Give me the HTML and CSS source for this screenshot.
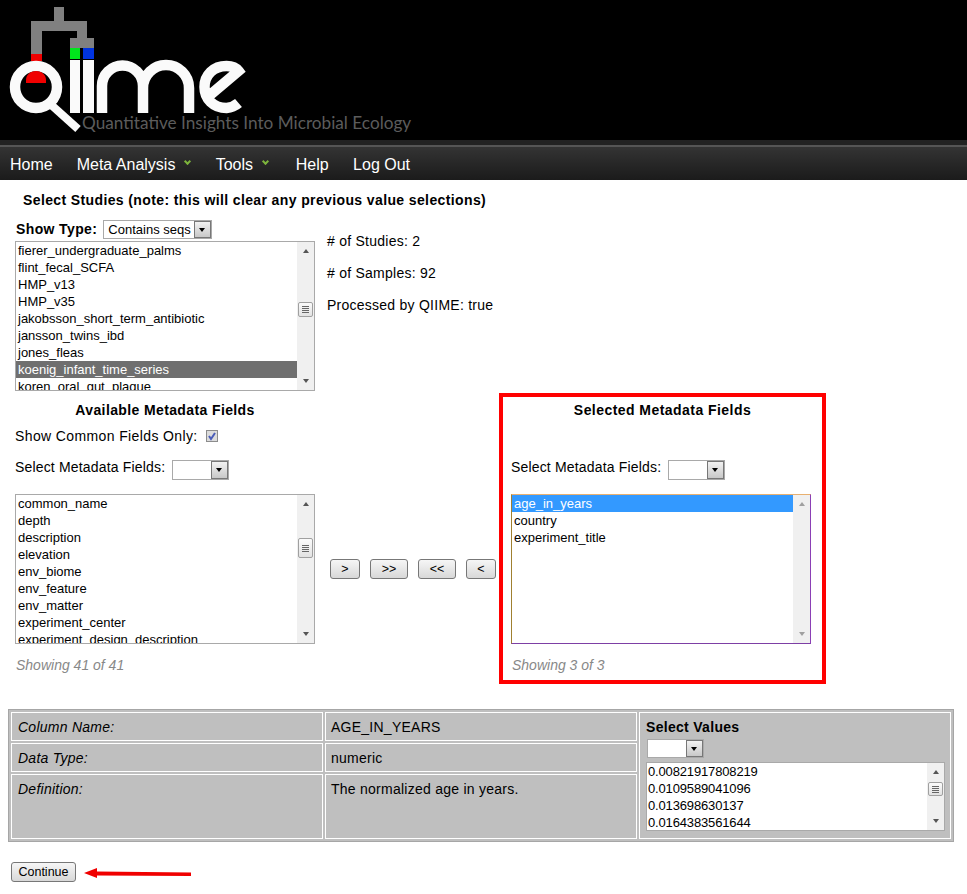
FILE: index.html
```html
<!DOCTYPE html>
<html>
  <head>
    <title>QIIME Meta Analysis</title>
    <link rel="stylesheet" href="styles.css">
  </head>
  <body>
    <header class="banner">
      <svg class="logo" width="250" height="135" viewBox="0 0 250 135">
        <path class="tree" d="M54 7h10v14h23v17h7v10H70V38h7v-7H42v23H31V21h23z"/>
        <rect class="red" x="31" y="54" width="11" height="7"/>
        <rect class="green" x="70" y="48" width="10" height="11"/>
        <rect class="blue" x="83" y="48" width="11" height="11"/>
        <circle class="stroke" cx="36" cy="87" r="21" stroke-width="10.5"/>
        <path class="stroke" stroke-width="8" d="M48 102 78 129"/>
        <path class="red" d="M26 83v-3c0-5 4-9 10-9s10 4 10 9v3z"/>
        <path class="white" d="M70 60h10v53H70zM83 60h11v53H83z"/>
        <path class="stroke" stroke-width="10.5" d="M102 113V86a20.5 20.5 0 0 1 41 0v27M143 88a23 23 0 0 1 46 0v25"/>
        <path class="stroke" stroke-width="10.5" d="M238.500 103a21 21 0 0 1-12 5c-13 0-22-9-22-21s9-21 22-21c5 0 9 1 12 5l-32 27"/>
      </svg>
      <div class="tagline">Quantitative Insights Into Microbial Ecology</div>
    </header>
    <nav class="menu">
      <a class="menu-item home">Home</a>
      <a class="menu-item meta">Meta Analysis<span class="caret"></span></a>
      <a class="menu-item tools">Tools<span class="caret"></span></a>
      <a class="menu-item help">Help</a>
      <a class="menu-item">Log Out</a>
    </nav>

    <main class="page">
      <h3 class="page-title">Select Studies (note: this will clear any previous value selections)</h3>

      <section class="studies">
        <div class="studies-left">
          <div class="show-type">
            <b class="show-label">Show Type:</b>
            <div class="dropdown wide"><span class="dropdown-text">Contains seqs</span><span class="dropdown-btn"></span></div>
          </div>
          <div class="listbox">
            <ul class="options">
              <li>fierer_undergraduate_palms</li>
              <li>flint_fecal_SCFA</li>
              <li>HMP_v13</li>
              <li>HMP_v35</li>
              <li>jakobsson_short_term_antibiotic</li>
              <li>jansson_twins_ibd</li>
              <li>jones_fleas</li>
              <li class="picked-gray">koenig_infant_time_series</li>
              <li>koren_oral_gut_plaque</li>
            </ul>
            <div class="scrollbar"><span class="arrow-up"></span><span class="thumb thumb-studies"></span><span class="arrow-down"></span></div>
          </div>
        </div>
        <div class="stats">
          <p># of Studies: 2</p>
          <p># of Samples: 92</p>
          <p>Processed by QIIME: true</p>
        </div>
      </section>

      <section class="fields">
        <div class="panel">
          <h4 class="panel-title">Available Metadata Fields</h4>
          <div class="common-row">
            Show Common Fields Only:
            <svg class="checkbox" width="12" height="12" viewBox="0 0 12 12">
              <rect x="0.5" y="0.5" width="11" height="11" fill="#dcdcdc" stroke="#8c8c8c"/>
              <path d="M3 6l2 3 4-6" fill="none" stroke="#4a5cb8" stroke-width="2"/>
            </svg>
          </div>
          <div class="select-row">
            <span class="select-label">Select Metadata Fields:</span>
            <div class="dropdown"><span class="dropdown-text"></span><span class="dropdown-btn"></span></div>
          </div>
          <div class="listbox field-list">
            <ul class="options">
              <li>common_name</li>
              <li>depth</li>
              <li>description</li>
              <li>elevation</li>
              <li>env_biome</li>
              <li>env_feature</li>
              <li>env_matter</li>
              <li>experiment_center</li>
              <li>experiment_design_description</li>
            </ul>
            <div class="scrollbar"><span class="arrow-up"></span><span class="thumb thumb-fields"></span><span class="arrow-down"></span></div>
          </div>
          <div class="showing">Showing 41 of 41</div>
        </div>

        <div class="movers">
          <button class="btn mover">&gt;</button>
          <button class="btn mover double">&gt;&gt;</button>
          <button class="btn mover double">&lt;&lt;</button>
          <button class="btn mover">&lt;</button>
        </div>

        <div class="panel selected">
          <h4 class="panel-title">Selected Metadata Fields</h4>
          <div class="common-row"></div>
          <div class="select-row">
            <span class="select-label">Select Metadata Fields:</span>
            <div class="dropdown"><span class="dropdown-text"></span><span class="dropdown-btn"></span></div>
          </div>
          <div class="listbox field-list focused">
            <ul class="options">
              <li class="picked-blue">age_in_years</li>
              <li>country</li>
              <li>experiment_title</li>
            </ul>
            <div class="scrollbar disabled"><span class="arrow-up"></span><span class="arrow-down"></span></div>
          </div>
          <div class="showing">Showing 3 of 3</div>
        </div>
      </section>

      <table class="details">
        <tr class="row-short">
          <td class="name">Column Name:</td>
          <td class="value">AGE_IN_YEARS</td>
          <td rowspan="3">
            <b class="values-title">Select Values</b>
            <div class="dropdown values-drop"><span class="dropdown-text"></span><span class="dropdown-btn"></span></div>
            <div class="listbox values-list">
              <ul class="options">
                <li>0.00821917808219</li>
                <li>0.0109589041096</li>
                <li>0.013698630137</li>
                <li>0.0164383561644</li>
              </ul>
              <div class="scrollbar"><span class="arrow-up"></span><span class="thumb thumb-values"></span><span class="arrow-down"></span></div>
            </div>
          </td>
        </tr>
        <tr class="row-short">
          <td class="name">Data Type:</td>
          <td class="value">numeric</td>
        </tr>
        <tr class="row-tall">
          <td class="name">Definition:</td>
          <td class="value">The normalized age in years.</td>
        </tr>
      </table>

      <div class="continue-row">
        <button class="btn continue">Continue</button>
        <svg class="pointer" width="108" height="12" viewBox="0 0 108 12">
          <path d="M0 6 13 1v3.500l94 1V9L13 8.500V11z" fill="#f00000"/>
        </svg>
      </div>
    </main>
  </body>
</html>
```

FILE: styles.css
```css
body {
  margin: 0;
  background-color: #fff;
  color: #000;
  font-family: "Liberation Sans", Arial, sans-serif;
  font-size: 14px;
  line-height: 16px;
}

/* top banner */
.banner {
  position: relative;
  height: 140px;
  background-color: #000;
}
.logo {
  display: block;
}
.tree {
  fill: #808080;
}
.red {
  fill: #f00000;
}
.green {
  fill: #00e51c;
}
.blue {
  fill: #0033e0;
}
.white {
  fill: #fafafa;
}
.stroke {
  fill: none;
  stroke: #fafafa;
}
.tagline {
  position: absolute;
  left: 82px;
  top: 113px;
  color: #5c5c5c;
  font-family: Lato, "Open Sans", sans-serif;
  font-size: 17.2px;
  line-height: 20px;
  white-space: nowrap;
}

.menu {
  display: flex;
  height: 33px;
  padding-left: 10px;
  background: linear-gradient(#353535, #1b1b1b);
  border-top: 5px solid #222;
  box-shadow: inset 0 2px 0 #555;
  padding-top: 2px;
  color: #fff;
  font-size: 16px;
  line-height: 35px;
}
.menu-item {
  margin-right: 24px;
}
.meta {
  margin-right: 0;
  width: 139px;
}
.tools {
  margin-right: 0;
  width: 80px;
}
.help {
  margin-right: 24.500px;
}
.caret {
  display: inline-block;
  width: 3px;
  height: 3px;
  margin: 0 0 6px 10px;
  border-right: 2px solid #7db43c;
  border-bottom: 2px solid #7db43c;
  transform: rotate(45deg);
}

/* page */
.page {
  padding: 12px 13px 0 8px;
}
.page-title {
  margin: 0 0 12px 15px;
  font-size: 14px;
  line-height: 16px;
  letter-spacing: 0.38px;
}

.studies {
  display: flex;
  padding-left: 7px;
}
.studies-left {
  width: 300px;
}
.show-type {
  display: flex;
  height: 21px;
  gap: 6px;
  padding-left: 1px;
}
.show-label {
  padding-top: 1px;
  letter-spacing: 0.38px;
}
.stats {
  margin-left: 12px;
  padding-top: 13px;
  letter-spacing: 0.25px;
}
.stats p {
  margin: 0 0 16px;
}

/* fake select controls */
.dropdown {
  display: flex;
  box-sizing: border-box;
  width: 57px;
  height: 20px;
  background-color: #fff;
  border: 1px solid #a9a9a9;
}
.dropdown.wide {
  width: 109px;
  height: 19px;
}
.dropdown-text {
  flex: 1;
  padding-left: 4px;
  font-size: 13px;
  line-height: 17px;
  white-space: nowrap;
}
.dropdown-btn {
  position: relative;
  box-sizing: border-box;
  width: 17px;
  background: linear-gradient(#f2f2f2, #c8c8c8);
  border: 1px solid #777;
}
.dropdown-btn::after {
  content: "";
  position: absolute;
  left: 4px;
  top: 6px;
  border: 3.5px solid transparent;
  border-top: 4px solid #000;
  border-bottom: 0;
}

.listbox {
  display: flex;
  box-sizing: border-box;
  width: 300px;
  height: 150px;
  overflow: hidden;
  background-color: #fff;
  border: 1px solid #a9a9a9;
}
.options {
  flex: 1;
  margin: 0;
  padding: 0;
  list-style: none;
  font-size: 13px;
  line-height: 17px;
}
.options li {
  height: 17px;
  padding-left: 2px;
  white-space: nowrap;
}
.picked-gray {
  background-color: #6f6f6f;
  color: #fff;
}
.picked-blue {
  background-color: #3399ff;
  color: #fff;
}
.focused {
  border-color: #e8b070 #8b3fb5 #7d3fa5 #a08030;
}

/* scrollbar pieces */
.scrollbar {
  position: relative;
  display: flex;
  flex-direction: column;
  justify-content: space-between;
  align-items: center;
  flex: none;
  box-sizing: border-box;
  width: 17px;
  padding: 7px 0;
  background-color: #f0f0f0;
}
.arrow-up,
.arrow-down {
  border: 3.5px solid transparent;
}
.arrow-up {
  border-bottom: 4px solid #555;
  border-top: 0;
}
.arrow-down {
  border-top: 4px solid #555;
  border-bottom: 0;
}
.disabled .arrow-up {
  border-bottom-color: #a0a0a0;
}
.disabled .arrow-down {
  border-top-color: #a0a0a0;
}
.thumb {
  position: absolute;
  left: 1px;
  box-sizing: border-box;
  width: 15px;
  background:
    repeating-linear-gradient(#666 0 1px, transparent 1px 2px) center / 7px 7px no-repeat,
    linear-gradient(#fbfbfb, #e2e2e2);
  border: 1px solid #a0a0a0;
  border-radius: 2px;
}
.thumb-studies {
  top: 60px;
  height: 15px;
}
.thumb-fields {
  top: 43px;
  height: 20px;
}
.thumb-values {
  top: 19px;
  height: 14px;
}

/* metadata field pickers */
.fields {
  display: flex;
  align-items: flex-start;
  margin-top: 2px;
  padding-left: 7px;
}
.panel {
  box-sizing: border-box;
  width: 300px;
  height: 291px;
  padding-top: 9px;
}
.panel-title {
  margin: 0;
  font-size: 14px;
  line-height: 16px;
  letter-spacing: 0.38px;
  text-align: center;
}
.common-row {
  display: flex;
  align-items: center;
  height: 20px;
  margin-top: 8px;
  letter-spacing: 0.38px;
}
.checkbox {
  margin-left: 8px;
}
.select-row {
  display: flex;
  align-items: flex-start;
  gap: 7px;
  margin-top: 14px;
}
.select-label {
  line-height: 14px;
  letter-spacing: 0.17px;
}
.field-list {
  margin-top: 14px;
}
.showing {
  margin-top: 12px;
  padding-left: 1px;
  color: #888;
  font-style: italic;
  line-height: 18px;
}
.selected {
  width: 327px;
  padding: 5px 0 0 8px;
  border: 4px solid #f00;
}
.selected .panel-title {
  margin-right: 8px;
  letter-spacing: 0.45px;
}

.movers {
  display: flex;
  gap: 10px;
  margin: 166px 3px 0 15px;
}
.btn {
  box-sizing: border-box;
  padding: 0;
  background: linear-gradient(#f6f6f6, #d8d8d8);
  border: 1px solid #777;
  border-radius: 3px;
  color: #000;
  font-family: inherit;
  font-size: 12.500px;
}
.mover {
  width: 30px;
  height: 20px;
}
.double {
  width: 38px;
}

/* details table */
.details {
  width: 946px;
  margin-top: 25px;
  table-layout: fixed;
  border: 1px solid #a6a6a6;
  border-spacing: 2px;
  background-color: #bfbfbf;
}
.details td {
  box-sizing: border-box;
  width: 312px;
  padding: 6px 6px 5px;
  border: 1px solid #fff;
  vertical-align: top;
}
.row-short {
  height: 29px;
}
.row-tall {
  height: 65px;
}
.details .value {
  padding-left: 5px;
  letter-spacing: 0.25px;
}
.name {
  font-style: italic;
  letter-spacing: 0.25px;
}
.values-title {
  letter-spacing: 0.3px;
}
.values-drop {
  height: 19px;
  margin: 4px 0 4px 1px;
}
.values-list {
  width: 299px;
  height: 69px;
}
.values-list .options {
  letter-spacing: -0.15px;
}
.values-list .options li {
  padding-left: 1px;
}

.continue-row {
  display: flex;
  align-items: center;
  margin: 20px 0 0 3px;
}
.continue {
  width: 65px;
  height: 20px;
}
.pointer {
  margin: 2px 0 0 8px;
}
```
